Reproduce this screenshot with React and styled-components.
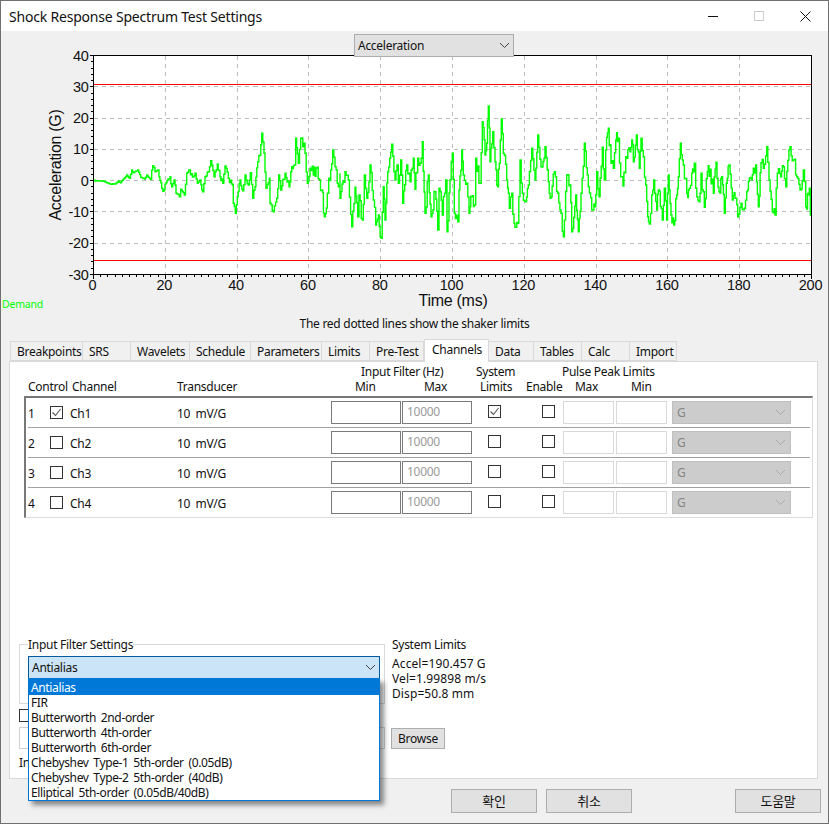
import React, { useMemo } from 'react';
import styled, { createGlobalStyle } from 'styled-components';

const GlobalStyle = createGlobalStyle`
    html, body {
        margin: 0;
        padding: 0;
        background: #f0f0f0;
    }
    * {
        box-sizing: border-box;
    }
`;

const UI_FONT = `"Noto Sans", "Noto Sans CJK KR", sans-serif`;

const Window = styled.div`
    width: 829px;
    height: 824px;
    display: flex;
    flex-direction: column;
    border: 1px solid #707070;
    background: #f0f0f0;
    font-family: ${UI_FONT};
    font-size: 12px;
    letter-spacing: -0.28px;
    line-height: 15px;
    color: #111;
    overflow: hidden;
`;

const TitleBar = styled.div`
    height: 30px;
    flex: none;
    display: flex;
    align-items: center;
    background: #fff;
    padding-left: 8px;
`;

const Title = styled.div`
    flex: 1;
    font-size: 14px;
    letter-spacing: -0.2px;
`;

const WindowButton = styled.div`
    width: 46px;
    height: 30px;
    display: flex;
    align-items: center;
    justify-content: center;
`;

const TopRow = styled.div`
    flex: none;
    padding: 3px 0 0 353px;
`;

const ChartSelect = styled.div`
    position: relative;
    z-index: 1;
    width: 160px;
    height: 23px;
    display: flex;
    align-items: center;
    justify-content: space-between;
    padding: 0 3px;
    background: #e1e1e1;
    border: 1px solid #adadad;
`;

const ChartSvg = styled.svg`
    display: block;
    flex: none;
    width: 827px;
    height: 266px;
    margin-top: -12px;
`;

const Caption = styled.div`
    flex: none;
    margin-top: 5px;
    text-align: center;
`;

const TabStrip = styled.div`
    flex: none;
    display: flex;
    height: 23px;
    margin: 8px 0 0 9px;
`;

const Tab = styled.div`
    width: ${(p) => p.$w}px;
    height: ${(p) => (p.$active ? 23 : 20)}px;
    margin-top: ${(p) => (p.$active ? 0 : 2)}px;
    padding: ${(p) => (p.$active ? '2px 0 0 7px' : '2px 0 0 6px')};
    background: ${(p) => (p.$active ? '#fff' : '#f0f0f0')};
    border: 1px solid #d9d9d9;
    border-left-width: ${(p) => (p.$active || p.$first ? 1 : 0)}px;
    border-bottom-width: ${(p) => (p.$active ? 0 : 1)}px;
    position: relative;
    z-index: ${(p) => (p.$active ? 1 : 0)};
    white-space: nowrap;
`;

const Panel = styled.div`
    flex: none;
    width: 809px;
    height: 418px;
    margin: -1px 0 0 8px;
    padding: 2px 0 0 9px;
    background: #fff;
    border: 1px solid #d9d9d9;
`;

const HeaderLine = styled.div`
    display: flex;
    height: 15px;
    padding-left: 9px;
`;

const HeaderCell = styled.div`
    flex: none;
    width: ${(p) => p.$w}px;
    white-space: nowrap;
`;

const ChannelFrame = styled.div`
    width: 789px;
    height: 122px;
    margin: 2px 0 0 5px;
    padding-left: 2px;
    border-style: solid;
    border-width: 2px 1px 1px 2px;
    border-color: #787878 #dcdcdc #dcdcdc #787878;
`;

const ChannelRow = styled.div`
    display: grid;
    grid-template-columns: 22px 20px 107px 154px 71px 70px 70px 21px 53px 56px 119px;
    align-items: center;
    height: ${(p) => (p.$last ? 29 : 30)}px;
    border-bottom: ${(p) => (p.$last ? 'none' : '1px solid #a0a0a0')};
    margin-right: 2px;
`;

const RowText = styled.span`
    padding-top: 2px;
    word-spacing: 2.5px;
`;

const CheckBox = styled.span`
    display: flex;
    align-items: center;
    justify-content: center;
    width: 13px;
    height: 13px;
    margin: ${(p) => (p.$raised ? '0 0 2px 0' : '0')};
    margin-left: ${(p) => p.$left || 0}px;
    border: 1px solid #333;
    background: #fff;
`;

const NumberInput = styled.div`
    width: ${(p) => p.$w}px;
    height: 23px;
    padding: 2px 0 0 4px;
    background: #fff;
    color: #9a9a9a;
    border: 1px solid ${(p) => (p.$disabled ? '#d9d9d9' : '#7a7a7a')};
`;

const UnitSelect = styled.div`
    width: 119px;
    height: 23px;
    display: flex;
    align-items: center;
    justify-content: space-between;
    padding: 0 4px;
    background: #cccccc;
    color: #858585;
    border: 1px solid #bfbfbf;
`;

const BottomRow = styled.div`
    display: flex;
    align-items: ${(p) => p.$align || 'flex-start'};
    margin-top: ${(p) => p.$top || 0}px;
`;

const FilterGroup = styled.fieldset`
    width: 366px;
    height: 67px;
    min-inline-size: 0;
    margin: 0;
    padding: 0 4px 0 8px;
    border: 1px solid #d9d9d9;
`;

const GroupTitle = styled.legend`
    padding: 0;
    line-height: 15px;
`;

const SelectWrap = styled.div`
    position: relative;
    margin-top: 4px;
`;

const FilterSelect = styled.div`
    height: 23px;
    display: flex;
    align-items: center;
    justify-content: space-between;
    padding: 0 3px 0 3px;
    background: #cce4f7;
    border: 1px solid #005a9e;
`;

const ListBox = styled.div`
    position: absolute;
    z-index: 5;
    top: 22px;
    left: 0;
    width: 100%;
    height: 123px;
    background: #fff;
    border: 1px solid #0078d7;
    box-shadow: 4px 4px 5px rgba(0, 0, 0, 0.45);
`;

const ListItem = styled.div`
    height: ${(p) => (p.$selected ? 16 : 15)}px;
    line-height: ${(p) => (p.$selected ? 17 : 15)}px;
    padding-left: 2px;
    white-space: nowrap;
    letter-spacing: -0.36px;
    word-spacing: 2px;
    background: ${(p) => (p.$selected ? '#0078d7' : 'transparent')};
    color: ${(p) => (p.$selected ? '#fff' : '#111')};
`;

const LimitsColumn = styled.div`
    margin-left: 7px;
`;

const LimitsList = styled.div`
    margin-top: 4px;
    letter-spacing: 0.1px;
`;

const FileInput = styled.div`
    width: 366px;
    height: 22px;
    background: #fff;
    border: 1px solid #d0d0d0;
`;

const Button = styled.div`
    width: ${(p) => p.$w}px;
    height: ${(p) => p.$h || 24}px;
    display: flex;
    align-items: center;
    justify-content: center;
    margin-left: ${(p) => p.$left || 0}px;
    background: #e1e1e1;
    border: 1px solid #adadad;
    font-size: ${(p) => p.$size || 12}px;
`;

const ButtonRow = styled.div`
    flex: none;
    display: flex;
    margin-top: 10px;
    padding: 0 7px 0 450px;
`;

const Spacer = styled.div`
    flex: 1;
`;

const Chevron = ({ color = '#444' }) => (
    <svg width="11" height="7" viewBox="0 0 11 7" fill="none">
        <path d="M1 1l4.5 4.5L10 1" stroke={color} strokeWidth="1" />
    </svg>
);

const Check = () => (
    <svg width="11" height="11" viewBox="0 0 11 11" fill="none">
        <path d="M1.5 5.5l3 3 5-6.5" stroke="#555" strokeWidth="1.1" />
    </svg>
);

// trace read off the screenshot, [x, y] in three times scale, per crop
const TRACE = [
    [90, [10,242,40,243,60,252,75,252,85,243,92,248,100,237,110,225,118,235,125,210,130,218,143,210,152,232,163,237,170,225,182,238,188,197,195,215,203,210,207,230,215,265,222,270,228,248,240,230,245,260,252,240,258,280,268,290,272,268,283,285,290,220,296,210,310,230,315,220,322,250,330,240,338,275,345,230,355,215,362,182,372,230,382,192,390,230,398,250,405,198,415,235,428,255,430,310,436,340,442,290,450,240,458,272,465,225,475,255,481,218,488,295,495,260,503,185,510,165,515,100,522,160,528,265,538,235,540,310,550,335,560,295,566,225,572,270,585,220,597,260,605,200,613,195,617,115,625,190,632,115,645,160,652,250,660,205,670,225,678,205,688,240,695,270,703,350,712,280,716,235,722,210,728,150,735,200,745,260,750,220]],
    [335, [15,295,30,215,40,240,50,380,60,262,68,350,72,285,82,360,88,225,95,295,105,195,115,300,122,375,130,345,138,415,145,260,150,360,158,215,170,133,180,240,186,195,190,250,197,180,203,310,215,195,225,245,235,175,240,268,248,175,255,190,262,125,270,340,280,225,288,350,300,275,308,390,312,265,322,345,332,240,336,395,345,240,352,160,358,340,368,365,372,270,380,150,385,225,395,250,402,340,410,290,418,315,422,175,435,250,442,65,450,165,455,130,460,18,465,185,473,95,480,185,488,260,493,190,499,57,505,160,515,240,523,325,530,280,537,370,548,370,555,180,562,280,572,305,580,255,590,145,600,240,608,105,618,200,630,140,640,245,648,290,658,215,668,280,678,340,685,410,695,225,705,255,710,395,722,285,730,395,738,280,748,135]],
    [575, [28,130,40,260,50,330,60,320,65,215,72,290,82,142,88,240,92,150,100,85,108,190,115,205,122,120,130,115,137,230,144,258,152,170,165,155,170,120,175,185,184,105,193,205,198,115,205,170,212,255,218,350,223,372,230,285,236,240,245,330,250,270,262,360,268,265,275,360,280,225,288,345,296,375,305,285,310,230,316,130,325,195,335,280,343,265,350,220,358,190,362,265,372,305,378,220,388,322,397,215,405,208,415,280,423,187,432,275,440,230,448,340,454,250,462,195,472,300,480,295,488,350,498,310,508,325,515,275,523,235,535,205,542,195,550,320,558,188,565,205,575,140,582,240,592,335,600,345,607,220,617,230,625,200,632,260,645,140,655,180,665,230,675,270,685,210,692,320,703,265,706,345,710,383]],
];

const buildTrace = () => {
    const knots = [];
    TRACE.forEach(([originX, values]) => {
        for (let i = 0; i < values.length; i += 2) {
            knots.push([originX + values[i] / 3, 100 + values[i + 1] / 3]);
        }
    });
    let seed = 7;
    const random = () => {
        seed = (seed * 16807) % 2147483647;
        return seed / 2147483647;
    };
    let d = `M${knots[0][0]} ${knots[0][1].toFixed(1)}`;
    for (let i = 1; i < knots.length; i++) {
        const [x0, y0] = knots[i - 1];
        const [x1, y1] = knots[i];
        const steps = Math.max(1, Math.round(x1 - x0));
        for (let s = 1; s <= steps; s++) {
            const x = x0 + ((x1 - x0) * s) / steps;
            const amp = x < 150 ? 0.8 : x < 300 ? 5 : 14;
            const noise = s === steps ? 0 : (random() - 0.5) * amp;
            const y = y0 + ((y1 - y0) * s) / steps + noise;
            d += `H${x.toFixed(1)}V${y.toFixed(1)}`;
        }
    }
    return d;
};

const PLOT = { left: 93.5, right: 811.5, top: 55.5, bottom: 274.5 };
const xAt = (ms) => PLOT.left + (ms / 200) * (PLOT.right - PLOT.left);
const yAt = (g) => PLOT.bottom - ((g + 30) / 70) * (PLOT.bottom - PLOT.top);
const X_MAJOR = [0, 20, 40, 60, 80, 100, 120, 140, 160, 180, 200];
const Y_MAJOR = [-30, -20, -10, 0, 10, 20, 30, 40];

const Chart = () => {
    const trace = useMemo(buildTrace, []);
    const xMinor = Array.from({ length: 101 }, (_, i) => i * 2);
    const yMinor = Array.from({ length: 36 }, (_, i) => -30 + i * 2);

    return (
        <ChartSvg viewBox="1 45 827 266">
            <clipPath id="plot-area">
                <rect x={PLOT.left} y={PLOT.top} width={PLOT.right - PLOT.left} height={PLOT.bottom - PLOT.top} />
            </clipPath>
            <rect x={PLOT.left} y={PLOT.top} width={PLOT.right - PLOT.left} height={PLOT.bottom - PLOT.top} fill="#fff" />
            <g stroke="#bdbdbd" strokeWidth="1" strokeDasharray="4 4" shapeRendering="crispEdges">
                {X_MAJOR.slice(1, -1).map((ms) => (
                    <line key={ms} x1={xAt(ms)} x2={xAt(ms)} y1={PLOT.top} y2={PLOT.bottom} />
                ))}
                {Y_MAJOR.slice(1, -1).map((g) => (
                    <line key={g} x1={PLOT.left} x2={PLOT.right} y1={yAt(g)} y2={yAt(g)} />
                ))}
            </g>
            <path d={trace} fill="none" stroke="#00ff00" strokeWidth="1.4" clipPath="url(#plot-area)" />
            <g stroke="#ff0000" strokeWidth="1.3" shapeRendering="crispEdges">
                <line x1={PLOT.left} x2={PLOT.right} y1="84.5" y2="84.5" />
                <line x1={PLOT.left} x2={PLOT.right} y1="260.5" y2="260.5" />
            </g>
            <g stroke="#000" strokeWidth="1" shapeRendering="crispEdges">
                {xMinor.map((ms) => (
                    <line key={ms} x1={xAt(ms)} x2={xAt(ms)} y1={PLOT.bottom} y2={PLOT.bottom + (ms % 20 === 0 ? 4 : 2.5)} />
                ))}
                {yMinor.map((g) => (
                    <line key={g} x1={PLOT.left - (g % 10 === 0 ? 4 : 3)} x2={PLOT.left} y1={yAt(g)} y2={yAt(g)} />
                ))}
            </g>
            <rect x={PLOT.left} y={PLOT.top} width={PLOT.right - PLOT.left} height={PLOT.bottom - PLOT.top} fill="none" stroke="#000" strokeWidth="1" shapeRendering="crispEdges" />
            <path d={`M${PLOT.left} ${PLOT.top}V${PLOT.bottom}H${PLOT.right}`} fill="none" stroke="#000" strokeWidth="1.6" shapeRendering="crispEdges" />
            <g fontFamily='"Liberation Sans", Arial, sans-serif' fontSize="14.5" fill="#111">
                {Y_MAJOR.map((g) => (
                    <text key={g} x="88.5" y={yAt(g) + 5} textAnchor="end">{g}</text>
                ))}
                {X_MAJOR.map((ms) => (
                    <text key={ms} x={xAt(ms) - 1} y="290" textAnchor="middle">{ms}</text>
                ))}
                <text x="453" y="306" fontSize="16" textAnchor="middle">Time (ms)</text>
                <text transform="translate(61 165) rotate(-90)" fontSize="16" textAnchor="middle">Acceleration (G)</text>
            </g>
            <text x="2" y="308" fontFamily={UI_FONT} fontSize="10.5" letterSpacing="-0.2" fill="#00ff00">Demand</text>
        </ChartSvg>
    );
};

const TABS = [
    ['Breakpoints', 73], ['SRS', 48], ['Wavelets', 59], ['Schedule', 61], ['Parameters', 71], ['Limits', 48],
    ['Pre-Test', 54], ['Channels', 65], ['Data', 45], ['Tables', 48], ['Calc', 48], ['Import', 47],
];

const CHANNELS = [1, 2, 3, 4];

const FILTERS = [
    'Antialias',
    'FIR',
    'Butterworth 2nd-order',
    'Butterworth 4th-order',
    'Butterworth 6th-order',
    'Chebyshev Type-1 5th-order (0.05dB)',
    'Chebyshev Type-2 5th-order (40dB)',
    'Elliptical 5th-order (0.05dB/40dB)',
];

const App = () => (
    <Window>
        <GlobalStyle />
        <TitleBar>
            <Title>Shock Response Spectrum Test Settings</Title>
            <WindowButton>
                <svg width="10" height="10" viewBox="0 0 10 10"><path d="M0 5.5h10" stroke="#111" /></svg>
            </WindowButton>
            <WindowButton>
                <svg width="10" height="10" viewBox="0 0 10 10"><rect x=".5" y=".5" width="9" height="9" fill="none" stroke="#ccc" /></svg>
            </WindowButton>
            <WindowButton>
                <svg width="11" height="11" viewBox="0 0 11 11"><path d="M.5.5l10 10M10.5.5l-10 10" stroke="#111" /></svg>
            </WindowButton>
        </TitleBar>

        <TopRow>
            <ChartSelect>
                Acceleration
                <Chevron />
            </ChartSelect>
        </TopRow>
        <Chart />
        <Caption>The red dotted lines show the shaker limits</Caption>

        <TabStrip>
            {TABS.map(([name, width], i) => (
                <Tab key={name} $w={width} $first={i === 0} $active={name === 'Channels'}>{name}</Tab>
            ))}
        </TabStrip>

        <Panel>
            <HeaderLine>
                <HeaderCell $w={333} />
                <HeaderCell $w={115}>Input Filter (Hz)</HeaderCell>
                <HeaderCell $w={86}>System</HeaderCell>
                <HeaderCell $w={100}>Pulse Peak Limits</HeaderCell>
            </HeaderLine>
            <HeaderLine>
                <HeaderCell $w={44}>Control</HeaderCell>
                <HeaderCell $w={105}>Channel</HeaderCell>
                <HeaderCell $w={178}>Transducer</HeaderCell>
                <HeaderCell $w={69}>Min</HeaderCell>
                <HeaderCell $w={56}>Max</HeaderCell>
                <HeaderCell $w={46}>Limits</HeaderCell>
                <HeaderCell $w={49}>Enable</HeaderCell>
                <HeaderCell $w={56}>Max</HeaderCell>
                <HeaderCell $w={30}>Min</HeaderCell>
            </HeaderLine>

            <ChannelFrame>
                {CHANNELS.map((n) => (
                    <ChannelRow key={n} $last={n === 4}>
                        <RowText>{n}</RowText>
                        <CheckBox>{n === 1 && <Check />}</CheckBox>
                        <RowText>Ch{n}</RowText>
                        <RowText>10 mV/G</RowText>
                        <NumberInput $w={70} />
                        <NumberInput $w={70}>10000</NumberInput>
                        <CheckBox $raised $left={16}>{n === 1 && <Check />}</CheckBox>
                        <CheckBox $raised />
                        <NumberInput $w={51} $disabled />
                        <NumberInput $w={51} $disabled />
                        <UnitSelect>
                            G
                            <Chevron color="#aaa" />
                        </UnitSelect>
                    </ChannelRow>
                ))}
            </ChannelFrame>

            <BottomRow $top={119}>
                <FilterGroup>
                    <GroupTitle>Input Filter Settings</GroupTitle>
                    <SelectWrap>
                        <FilterSelect>
                            Antialias
                            <Chevron />
                        </FilterSelect>
                        <ListBox>
                            {FILTERS.map((filter, i) => (
                                <ListItem key={filter} $selected={i === 0}>{filter}</ListItem>
                            ))}
                        </ListBox>
                    </SelectWrap>
                </FilterGroup>
                <LimitsColumn>
                    System Limits
                    <LimitsList>
                        <div>Accel=190.457 G</div>
                        <div>Vel=1.99898 m/s</div>
                        <div>Disp=50.8 mm</div>
                    </LimitsList>
                </LimitsColumn>
            </BottomRow>
            <BottomRow $top={5}>
                <CheckBox />
            </BottomRow>
            <BottomRow $top={5} $align="center">
                <FileInput />
                <Button $w={54} $h={21} $left={6}>Browse</Button>
            </BottomRow>
            <BottomRow $top={6}>In</BottomRow>
        </Panel>

        <ButtonRow>
            <Button $w={86} $size={13}>확인</Button>
            <Button $w={86} $left={9} $size={13}>취소</Button>
            <Spacer />
            <Button $w={86} $size={13}>도움말</Button>
        </ButtonRow>
    </Window>
);

export default App;
